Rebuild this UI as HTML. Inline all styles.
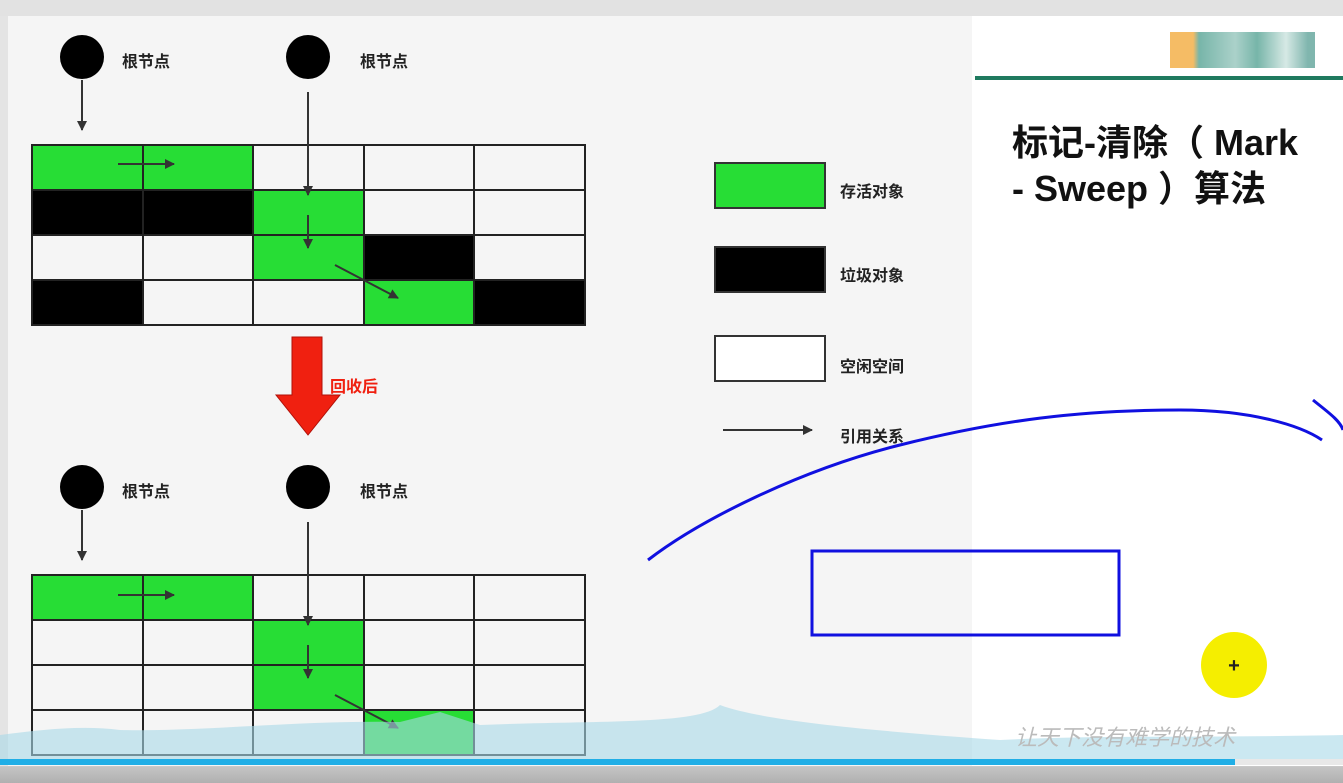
<!DOCTYPE html>
<html><head><meta charset="utf-8"><style>
body{margin:0;width:1343px;height:783px;overflow:hidden;background:#c8c8c8;position:relative;font-family:"Liberation Sans","Noto Sans CJK SC",sans-serif}
.a{position:absolute}
.t{position:absolute;font-size:16px;font-weight:bold;color:#222}
</style></head><body>
<div class="a" style="left:0;top:0;width:1343px;height:16px;background:#e2e2e2"></div>
<div class="a" style="left:0;top:16px;width:8px;height:750px;background:#e4e4e4"></div>
<div class="a" style="left:8px;top:16px;width:964px;height:750px;background:#f5f5f5"></div>
<div class="a" style="left:972px;top:16px;width:371px;height:750px;background:#fff"></div>
<div class="a" style="left:975px;top:76px;width:368px;height:4px;background:#1f7a5f"></div>
<div class="a" style="left:1170px;top:32px;width:145px;height:36px;background:linear-gradient(90deg,#f3b04a 0,#f3b04a 16%,#5fa89a 20%,#9cc9c0 45%,#5fa89a 60%,#cfe5e0 80%,#6aa9a0 95%);opacity:.85"></div>
<div class="a" style="left:1012px;top:120px;font-size:36px;font-weight:bold;line-height:46px;color:#111;white-space:nowrap">标记-清除（ Mark<br>- Sweep ）算法</div>
<svg class="a" style="left:0;top:0" width="1343" height="783">
<defs><marker id="m" markerWidth="10" markerHeight="10" refX="9" refY="5" orient="auto" markerUnits="userSpaceOnUse"><path d="M0,0L10,5L0,10z" fill="#333"/></marker></defs>
<g stroke="#222" stroke-width="2">
<rect x="32" y="145" width="221" height="45" fill="#27dd35"/>
<rect x="32" y="190" width="221" height="45" fill="#000"/>
<rect x="253" y="190" width="111" height="90" fill="#27dd35"/>
<rect x="364" y="235" width="110" height="45" fill="#000"/>
<rect x="32" y="280" width="111" height="45" fill="#000"/>
<rect x="364" y="280" width="110" height="45" fill="#27dd35"/>
<rect x="474" y="280" width="111" height="45" fill="#000"/>
<path d="M32 145H585V325H32Z M32 190H585 M32 235H585 M32 280H585 M143 145V325 M253 145V325 M364 145V325 M474 145V325" fill="none"/>
<rect x="32" y="575" width="221" height="45" fill="#27dd35"/>
<rect x="253" y="620" width="111" height="90" fill="#27dd35"/>
<rect x="364" y="710" width="110" height="45" fill="#27dd35"/>
<path d="M32 575H585V755H32Z M32 620H585 M32 665H585 M32 710H585 M143 575V755 M253 575V755 M364 575V755 M474 575V755" fill="none"/>
</g>
<g fill="#000"><circle cx="82" cy="57" r="22"/><circle cx="308" cy="57" r="22"/><circle cx="82" cy="487" r="22"/><circle cx="308" cy="487" r="22"/></g>
<g stroke="#333" stroke-width="2" marker-end="url(#m)">
<line x1="82" y1="80" x2="82" y2="130"/><line x1="308" y1="92" x2="308" y2="195"/>
<line x1="118" y1="164" x2="174" y2="164"/><line x1="308" y1="215" x2="308" y2="248"/><line x1="335" y1="265" x2="398" y2="298"/>
<line x1="82" y1="510" x2="82" y2="560"/><line x1="308" y1="522" x2="308" y2="625"/>
<line x1="118" y1="595" x2="174" y2="595"/><line x1="308" y1="645" x2="308" y2="678"/><line x1="335" y1="695" x2="398" y2="728"/>
<line x1="723" y1="430" x2="812" y2="430"/>
</g>
<path d="M292 337H322V395H340L308 435L276 395H292Z" fill="#f02010" stroke="#b01008"/>
<rect x="715" y="163" width="110" height="45" fill="#27dd35" stroke="#333" stroke-width="2"/>
<rect x="715" y="247" width="110" height="45" fill="#000" stroke="#333" stroke-width="2"/>
<rect x="715" y="336" width="110" height="45" fill="#fff" stroke="#333" stroke-width="2"/>
<path d="M648 560C700 520 800 470 900 445C1000 420 1080 410 1180 410C1250 410 1300 425 1322 440" fill="none" stroke="#1010e0" stroke-width="3"/>
<path d="M1313 400C1325 410 1340 420 1343 430" fill="none" stroke="#1010e0" stroke-width="3"/>
<rect x="812" y="551" width="307" height="84" fill="none" stroke="#1010e0" stroke-width="3"/>
<circle cx="1234" cy="665" r="33" fill="#f5ee00"/>
<text x="1234" y="672" font-size="20" text-anchor="middle" font-weight="bold" fill="#222">+</text>
<path d="M0 735C40 730 80 725 120 730C200 732 300 720 400 722L440 712L480 725C600 720 700 725 720 705C760 720 860 730 1000 740C1100 735 1200 738 1343 735V760H0Z" fill="#a8d8e8" opacity=".6"/>
<text x="1015" y="745" font-size="22" fill="#bbb" font-style="italic" font-family="Noto Sans CJK SC">让天下没有难学的技术</text>
</svg>
<div class="t" style="left:122px;top:48px">根节点</div><div class="t" style="left:360px;top:48px">根节点</div>
<div class="t" style="left:122px;top:478px">根节点</div><div class="t" style="left:360px;top:478px">根节点</div>
<div class="t" style="left:330px;top:373px;color:#f02010">回收后</div>
<div class="t" style="left:840px;top:178px">存活对象</div>
<div class="t" style="left:840px;top:262px">垃圾对象</div>
<div class="t" style="left:840px;top:353px">空闲空间</div>
<div class="t" style="left:840px;top:423px">引用关系</div>
<div class="a" style="left:0;top:759px;width:1235px;height:6px;background:#20aee6"></div>
<div class="a" style="left:1235px;top:759px;width:108px;height:6px;background:#e8e8e8"></div>
<div class="a" style="left:0;top:767px;width:1343px;height:16px;background:linear-gradient(#c4c4c4,#b0b0b0)"></div>
</body></html>
